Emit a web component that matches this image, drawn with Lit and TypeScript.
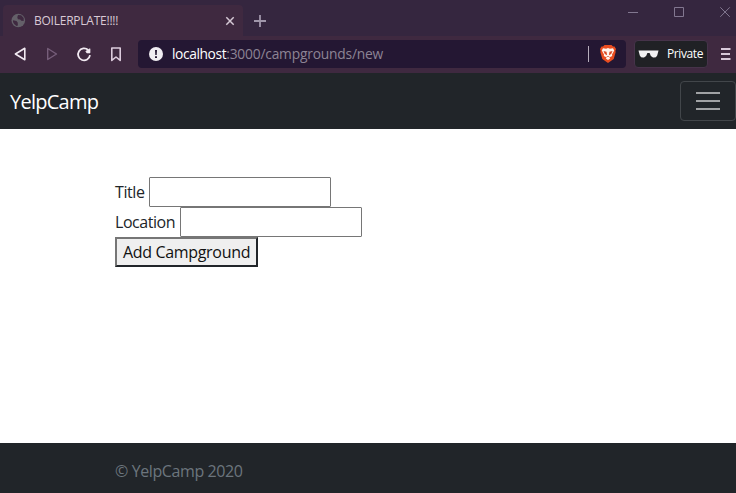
import { LitElement, html, css } from "lit";
import { customElement } from "lit/decorators.js";

@customElement("browser-chrome")
class BrowserChrome extends LitElement {
  static styles = css`
    :host { display: block; height: 73px; background: #3f2940; font-family: "Open Sans", "Noto Sans", sans-serif; }
    * { box-sizing: border-box; }
    svg { display: block; flex: none; fill: none; }
    .tabs { display: flex; height: 36px; background: #35263f; }
    .tab { display: flex; align-items: center; width: 240px; height: 31px; margin: 5px 0 0 3px; padding: 0 8px; background: #3f2940; border-radius: 4px 4px 0 0; }
    .tab-title { flex: 1; margin-left: 8px; color: #d8c9d5; font-size: 12px; letter-spacing: -0.24px; white-space: nowrap; }
    .add { margin: 14px 0 0 10px; }
    .window { margin-left: auto; }
    .toolbar { display: flex; align-items: center; height: 37px; padding-bottom: 1px; }
    .nav { margin-right: 2px; }
    .address { display: flex; align-items: center; width: 488px; height: 28px; background: #241733; border-radius: 4px; padding: 0 10px 0 11px; }
    .url { flex: 1; margin-left: 9px; font-size: 13.8px; line-height: 18px; white-space: nowrap; color: #8d8495; letter-spacing: -0.2px; }
    .host { color: #fff; letter-spacing: -0.4px; }
    .divider { width: 1px; height: 16px; background: #b6aebc; margin-right: 11px; }
    .private { display: flex; align-items: center; width: 74px; height: 28px; margin-left: 8px; padding-left: 3px; background: #202125; border: 1px solid #46334a; border-radius: 4px; color: #fff; font-size: 12px; letter-spacing: -0.4px; }
    .private svg { margin-right: 8px; }
    .menu { margin-left: 13px; }
  `;

  render() {
    return html`
      <div class="tabs">
        <div class="tab">
          <svg width="15" height="15" viewBox="0 0 15 15">
            <circle cx="7.3" cy="7.5" r="6.8" fill="#646069" />
            <path d="M2 7.2 5.5 8l1.2 1.5.2 3.1-1.4.3A6 6 0 0 1 2 9zM7 2l3.2.2L12.7 5v3l-2.5-.3-1-1.2-2.3-.2-.6-2z" fill="#3f2940" />
          </svg>
          <span class="tab-title">BOILERPLATE!!!!</span>
          <svg width="10" height="10" viewBox="0 0 10 10" stroke="#d5c8d5" stroke-width="1.5"><path d="m1.3 1.3 7.4 7.4m0-7.4L1.3 8.7" /></svg>
        </div>
        <svg class="add" width="14" height="14" viewBox="0 0 14 14" stroke="#a096aa" stroke-width="1.8"><path d="M7 1v12M1 7h12" /></svg>
        <svg class="window" width="110" height="26" viewBox="0 0 110 26" stroke="#827790">
          <path d="M2 12.5h10M48.5 7.5h9v9h-9zM94.3 7.3l9.5 9.5m0-9.5-9.5 9.5" />
        </svg>
      </div>
      <div class="toolbar">
        <svg class="nav" width="136" height="28" viewBox="0 0 136 28" stroke-width="1.6" stroke-linejoin="round">
          <path d="M24.8 8.3v11.4L15.4 14z" stroke="#f2eaf2" />
          <path d="M47.7 8.5v11l8.8-5.5z" stroke="#765e7a" stroke-width="1.4" />
          <path d="M88.2 10A6 6 0 1 0 90 15.2" stroke="#f2eaf2" stroke-width="1.8" />
          <path d="M85.8 11.3 90 8.7v4.2h-3.2z" fill="#f2eaf2" stroke="#f2eaf2" stroke-width=".7" />
          <path d="M111.8 8h8.4v12.4L116 17l-4.2 3.4z" stroke="#dccbdc" />
        </svg>
        <div class="address">
          <svg width="14" height="14" viewBox="0 0 14 14"><circle cx="7" cy="7" r="7" fill="#f0edf2" /><path d="M6 3h2l-.3 5H6.3zM6 9.2h2v1.8H6z" fill="#241733" /></svg>
          <span class="url"><span class="host">localhost</span>:3000/campgrounds/new</span>
          <span class="divider"></span>
          <svg width="16" height="18" viewBox="0 0 16 18">
            <path d="M4.5 0h7l1.5 1.6 1.5-.1L16 4l-.6 2 .3 1-2 7L8 18l-5.7-4-2-7 .3-1L0 4l1.5-2.5 1.5.1z" fill="#e94d20" />
            <path d="m3 3.3 3.1.4L8 3.1l1.9.6 3.1-.4 1.2 2.3-2.2 4 .2 1.3-3 1.7 1 1L8 15l-2.2-1.4 1-1-3-1.7.2-1.3-2.2-4z" fill="#fff5ed" />
            <path d="m3.5 6 3 .8.6 3.5-2.3-1.4zM12.5 6l-3 .8-.6 3.5 2.3-1.4zM6.3 11h3.4L8 12z" fill="#db4824" />
          </svg>
        </div>
        <div class="private">
          <svg width="21" height="8" viewBox="0 0 21 8"><path d="M.5.5h20l-.5 2-.8 2.9Q18 8 15 7.5 12.5 7 12 4l-.4-1H9.4L9 4Q8.4 7 6 7.5 3 8 1.8 5.4L1 2.5z" fill="#f1f0f2" /></svg>Private
        </div>
        <svg class="menu" width="10" height="14" viewBox="0 0 10 14" stroke="#d8c9d9" stroke-width="2"><path d="M0 2h9.5M0 7h9M0 12h9.5" /></svg>
      </div>
    `;
  }
}

@customElement("app-root")
class AppRoot extends LitElement {
  static styles = css`
    :host { display: flex; flex-direction: column; height: 493px; overflow: hidden; background: #fff; color: #212529; font: 16px/24px "Open Sans", "Noto Sans", sans-serif; }
    * { box-sizing: border-box; }
    .navbar { display: flex; align-items: center; justify-content: space-between; flex: none; height: 56px; padding-left: 10px; background: #212529; }
    .brand { color: #fff; font-size: 20px; line-height: 30px; letter-spacing: -0.75px; margin-top: 1px; }
    .toggler { width: 56px; height: 40px; padding: 0; background: none; border: 1px solid #42464a; border-radius: 4px; }
    .toggler svg { display: block; margin: auto; }
    main { flex: 1; padding: 48px 0 0 115px; }
    form { margin: 0; }
    .row { display: flex; align-items: center; height: 30px; }
    .title, .location { flex: none; font-size: 16px; white-space: nowrap; }
    .title { width: 34px; letter-spacing: -0.4px; }
    .location { width: 65px; letter-spacing: -0.45px; }
    .field { width: 182px; height: 30px; margin: 0; padding: 1px 2px; font: inherit; background: #fff; border: 1px solid #767676; border-radius: 1px; }
    .submit { display: block; width: 143px; height: 30px; margin: 0; padding: 0; font: 16px/24px "Open Sans", "Noto Sans", sans-serif; letter-spacing: -0.32px; white-space: nowrap; color: #111; background: #efefef; border: 2px solid; border-color: #767676 #212529 #212529 #767676; border-radius: 0; }
    footer { flex: none; height: 50px; padding: 16px 0 0 115px; background: #212529; color: #6c757d; font-size: 16px; line-height: 24px; letter-spacing: -0.4px; }
  `;

  render() {
    return html`
      <browser-chrome></browser-chrome>
      <nav class="navbar">
        <span class="brand">YelpCamp</span>
        <button class="toggler" aria-label="Toggle navigation">
          <svg width="24" height="20" viewBox="0 0 24 20" fill="none" stroke="#a0a2a4" stroke-width="2"><path d="M0 2h24M0 10h24M0 18h24" /></svg>
        </button>
      </nav>
      <main>
        <form>
          <div class="row"><label class="title" for="title">Title</label><input class="field" id="title" type="text" /></div>
          <div class="row"><label class="location" for="location">Location</label><input class="field" id="location" type="text" /></div>
          <button class="submit" type="button">Add Campground</button>
        </form>
      </main>
      <footer>© YelpCamp 2020</footer>
    `;
  }
}
